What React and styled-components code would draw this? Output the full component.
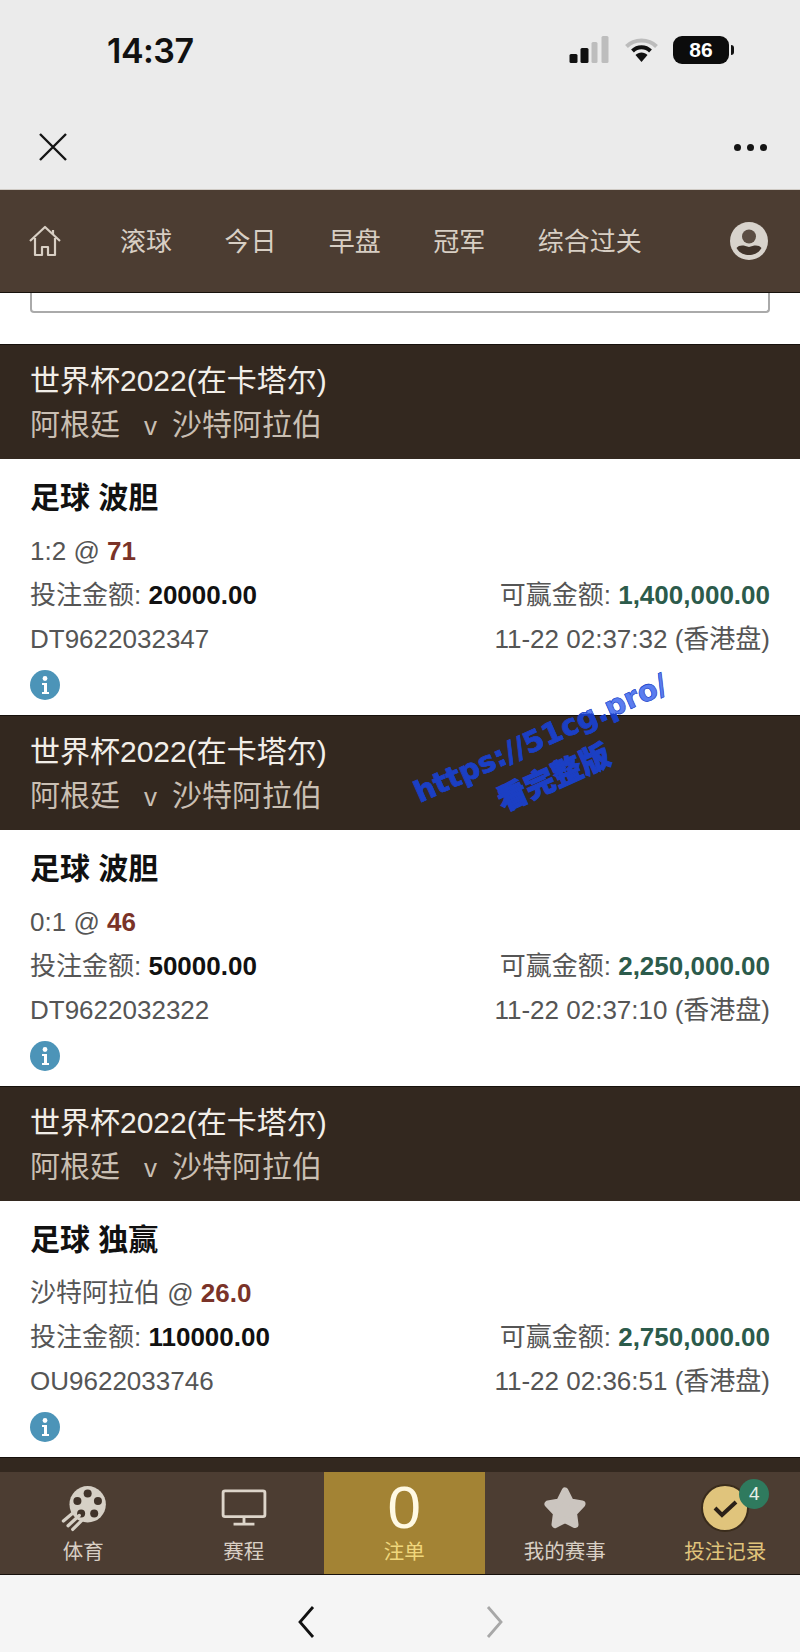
import styled, { createGlobalStyle } from 'styled-components';

const bets = [
  { market: '足球 波胆', pick: '1:2', odds: '71', stake: '20000.00', win: '1,400,000.00', id: 'DT9622032347', time: '11-22 02:37:32 (香港盘)' },
  { market: '足球 波胆', pick: '0:1', odds: '46', stake: '50000.00', win: '2,250,000.00', id: 'DT9622032322', time: '11-22 02:37:10 (香港盘)' },
  { market: '足球 独赢', pick: '沙特阿拉伯', odds: '26.0', stake: '110000.00', win: '2,750,000.00', id: 'OU9622033746', time: '11-22 02:36:51 (香港盘)' },
];

const links = ['滚球', '今日', '早盘', '冠军', '综合过关'];

const App = () => <>
  <GlobalStyle />
  <Phone>
    <StatusBar>
      <Clock>14:37</Clock>
      <StatusIcons>
        <svg width="41" height="30" viewBox="0 0 40 30">
          <rect x="0" y="19" width="8" height="9" rx="1.5" fill="#111" />
          <rect x="11" y="13" width="8" height="15" rx="1.5" fill="#111" />
          <rect x="22" y="7" width="6" height="21" rx="1.5" fill="#bdbdbd" />
          <rect x="32" y="1" width="7" height="27" rx="1.5" fill="#bdbdbd" />
        </svg>
        <svg width="35" height="26" viewBox="0 0 34 26">
          <path d="M2 9.5 C10 1.5 24 1.5 32 9.5" fill="none" stroke="#bcbcbc" strokeWidth="4" />
          <path d="M8 14 C13 9 21 9 26 14" fill="none" stroke="#111" strokeWidth="4" />
          <path d="M11 18 C14 14.5 20 14.5 23 18 L17 25 Z" fill="#111" />
        </svg>
        <Battery>86<BatteryNub /></Battery>
      </StatusIcons>
    </StatusBar>

    <Toolbar>
      <svg width="30" height="30" viewBox="0 0 30 30">
        <path d="M2 2 L28 28 M28 2 L2 28" stroke="#151515" strokeWidth="2.4" fill="none" />
      </svg>
      <Dots><i /><i /><i /></Dots>
    </Toolbar>

    <Nav>
      <svg width="34" height="32" viewBox="0 0 34 32">
        <path d="M2 16 L17 2 L32 16 M7 13 V30 H14 V22 H20 V30 H27 V13 M25 5 V9" fill="none" stroke="#d8cfc4" strokeWidth="2.2" strokeLinejoin="round" />
      </svg>
      <NavLinks>
        {links.map(link => <NavLink key={link}>{link}</NavLink>)}
      </NavLinks>
      <svg width="38" height="38" viewBox="0 0 38 38">
        <circle cx="19" cy="19" r="19" fill="#d8d3cc" />
        <circle cx="19" cy="14.5" r="7" fill="#5b4d43" />
        <path d="M6.5 26 C9 22.5 14 23 19 25 C24 23 29 22.5 31.5 26 C28 32 23 33 19 33 C15 33 10 32 6.5 26 Z" fill="#40332a" />
      </svg>
    </Nav>

    <Content>
      <SearchBox />
      {bets.map((bet, i) => (
        <div key={i}>
          <MatchHeader>
            <League>世界杯2022(在卡塔尔)</League>
            <Teams>阿根廷<Versus>v</Versus>沙特阿拉伯</Teams>
          </MatchHeader>
          <BetBody>
            <Market>{bet.market}</Market>
            <Row>
              <span>{bet.pick} @ <Odds>{bet.odds}</Odds></span>
            </Row>
            <Row>
              <span>投注金额: <Stake>{bet.stake}</Stake></span>
              <span>可赢金额: <Win>{bet.win}</Win></span>
            </Row>
            <Row>
              <span>{bet.id}</span>
              <span>{bet.time}</span>
            </Row>
            <InfoIcon viewBox="0 0 30 30">
              <circle cx="15" cy="15" r="15" fill="#4c94b8" />
              <circle cx="15" cy="8.5" r="2.4" fill="#fff" />
              <path d="M12 13 H17 V22 H19 V24 H12 V22 H14 V15 H12 Z" fill="#fff" />
            </InfoIcon>
          </BetBody>
        </div>
      ))}
      <MatchHeader />
    </Content>

    <TabBar>
      <Tab>
        <TabIcon>
          <svg width="56" height="52" viewBox="0 0 60 54">
            <circle cx="35" cy="23" r="19.5" fill="#d6d0c6" />
            <circle cx="35" cy="11.5" r="4.3" fill="#40332a" />
            <circle cx="46" cy="19.5" r="4.3" fill="#40332a" />
            <circle cx="42" cy="33" r="4.3" fill="#40332a" />
            <circle cx="28" cy="33" r="4.3" fill="#40332a" />
            <circle cx="24" cy="19.5" r="4.3" fill="#40332a" />
            <path d="M9 41 L22 30 M14 46 L26 35 M19 50 L29 40" stroke="#d6d0c6" strokeWidth="3.5" strokeLinecap="round" />
          </svg>
        </TabIcon>
        <TabLabel>体育</TabLabel>
      </Tab>
      <Tab>
        <TabIcon>
          <svg width="46" height="38" viewBox="0 0 48 40">
            <rect x="2" y="2" width="44" height="27" rx="2" fill="none" stroke="#ddd5ca" strokeWidth="3" />
            <path d="M24 30 V36 M13 37 H35" stroke="#ddd5ca" strokeWidth="3" />
          </svg>
        </TabIcon>
        <TabLabel>赛程</TabLabel>
      </Tab>
      <Tab $active>
        <TabIcon><Count>0</Count></TabIcon>
        <TabLabel $color="#f0d77c">注单</TabLabel>
      </Tab>
      <Tab>
        <TabIcon>
          <svg width="46" height="46" viewBox="0 0 46 46">
            <path d="M23 6 L28.5 17 L40 19 L31.5 28 L33 39.5 L23 34.5 L13 39.5 L14.5 28 L6 19 L17.5 17 Z" fill="#cbc5bf" stroke="#cbc5bf" strokeWidth="7" strokeLinejoin="round" />
          </svg>
        </TabIcon>
        <TabLabel>我的赛事</TabLabel>
      </Tab>
      <Tab>
        <TabIcon>
          <svg width="48" height="48" viewBox="0 0 48 48">
            <circle cx="24" cy="24" r="23" fill="#e0c47c" stroke="#3a2c1c" strokeWidth="2" />
            <path d="M14 24 L21 31 L35 18" fill="none" stroke="#2b2118" strokeWidth="4" />
          </svg>
          <Badge>4</Badge>
        </TabIcon>
        <TabLabel $color="#e0c47c">投注记录</TabLabel>
      </Tab>
    </TabBar>

    <BrowserBar>
      <svg width="18" height="32" viewBox="0 0 18 32">
        <path d="M16 1 L3 16 L16 31" fill="none" stroke="#111" strokeWidth="2.8" />
      </svg>
      <svg width="18" height="32" viewBox="0 0 18 32">
        <path d="M2 1 L15 16 L2 31" fill="none" stroke="#a8a8a8" strokeWidth="2.8" />
      </svg>
    </BrowserBar>

    <Watermark>
      <WatermarkUrl>https://51cg.pro/</WatermarkUrl>
      <WatermarkText>看完整版</WatermarkText>
    </Watermark>
  </Phone>
</>;

const GlobalStyle = createGlobalStyle`
  body {
    margin: 0;
    font-family: "Liberation Sans", "Noto Sans CJK SC", sans-serif;
  }
`;

const Phone = styled.div`
  position: relative;
  display: flex;
  flex-direction: column;
  width: 800px;
  height: 1652px;
  overflow: hidden;
  background: #fff;
`;

const StatusBar = styled.div`
  display: flex;
  align-items: center;
  justify-content: space-between;
  height: 100px;
  padding: 0 71px 0 107px;
  background: #ebebeb;
`;

const Clock = styled.span`
  font-family: "Inter", "Liberation Sans", sans-serif;
  font-size: 34px;
  font-weight: 600;
  letter-spacing: -0.5px;
  color: #111;
`;

const StatusIcons = styled.div`
  display: flex;
  align-items: center;
  gap: 14px;
`;

const Battery = styled.div`
  position: relative;
  display: flex;
  align-items: center;
  justify-content: center;
  width: 56px;
  height: 28px;
  border-radius: 9px;
  background: #0c0c0c;
  color: #fff;
  font-size: 21px;
  font-weight: 700;
`;

const BatteryNub = styled.i`
  position: absolute;
  right: -5px;
  top: 9px;
  width: 3px;
  height: 10px;
  border-radius: 0 3px 3px 0;
  background: #111;
`;

const Toolbar = styled.div`
  display: flex;
  align-items: center;
  justify-content: space-between;
  height: 84px;
  padding: 5px 33px 0 38px;
  background: #ebebeb;
`;

const Dots = styled.div`
  display: flex;
  gap: 6px;
  i {
    width: 7px;
    height: 7px;
    border-radius: 50%;
    background: #151515;
  }
`;

const Nav = styled.div`
  display: flex;
  align-items: center;
  height: 102px;
  padding: 0 32px 0 28px;
  background: #4c3d32;
  border-top: 1px solid #cfcac4;
  border-bottom: 1px solid #17110c;
`;

const NavLinks = styled.div`
  display: flex;
  flex: 1;
  gap: 52.4px;
  margin-left: 58px;
  margin-bottom: 3px;
`;

const NavLink = styled.span`
  font-size: 26px;
  color: #d8cfc4;
`;

const Content = styled.div`
  flex: 1;
  min-height: 0;
  overflow: hidden;
  background: #fff;
`;

const SearchBox = styled.div`
  height: 18px;
  margin: 0 30px 31px;
  border: 2px solid #aaa;
  border-top: none;
  border-radius: 0 0 4px 4px;
`;

const MatchHeader = styled.div`
  height: 115px;
  padding: 14px 30px 0;
  box-sizing: border-box;
  background: #33281f;
  border-top: 1px solid #17110c;
`;

const League = styled.div`
  font-size: 30px;
  line-height: 44px;
  color: #f2eee8;
`;

const Teams = styled.div`
  font-size: 30px;
  line-height: 44px;
  color: #c9bfb3;
`;

const Versus = styled.span`
  margin: 0 15px 0 24px;
  font-size: 26px;
`;

const BetBody = styled.div`
  height: 256px;
  padding: 17px 30px 0;
  box-sizing: border-box;
  background: #fff;
  color: #555;
  font-size: 26px;
`;

const Market = styled.div`
  margin-bottom: 9px;
  font-size: 30px;
  font-weight: 700;
  line-height: 44px;
  color: #111;
`;

const Row = styled.div`
  display: flex;
  justify-content: space-between;
  line-height: 44px;
`;

const Odds = styled.b`
  color: #7a3328;
`;

const Stake = styled.b`
  color: #111;
`;

const Win = styled.b`
  color: #2c5b4b;
`;

const InfoIcon = styled.svg`
  display: block;
  width: 30px;
  height: 30px;
  margin-top: 9px;
`;

const TabBar = styled.div`
  display: grid;
  grid-template-columns: repeat(5, 160.5px);
  height: 103px;
  padding-left: 3px;
  background: #4c3d32;
  border-bottom: 1px solid #17110c;
  box-sizing: border-box;
`;

const Tab = styled.div`
  display: flex;
  flex-direction: column;
  align-items: center;
  background: ${p => (p.$active ? '#a38334' : 'transparent')};
`;

const TabIcon = styled.div`
  position: relative;
  display: flex;
  align-items: center;
  justify-content: center;
  height: 70px;
  padding-top: 2px;
  box-sizing: border-box;
`;

const TabLabel = styled.span`
  margin-top: -2px;
  font-size: 20.5px;
  line-height: 24px;
  color: ${p => p.$color || '#d8cfc4'};
`;

const Count = styled.span`
  font-size: 60px;
  line-height: 60px;
  color: #fff9e3;
`;

const Badge = styled.span`
  position: absolute;
  top: 7px;
  right: -20px;
  width: 30px;
  height: 30px;
  border-radius: 50%;
  background: #2f7a5e;
  color: #e8f0e8;
  font-size: 19px;
  line-height: 30px;
  text-align: center;
`;

const BrowserBar = styled.div`
  display: flex;
  align-items: center;
  justify-content: center;
  gap: 171px;
  height: 77px;
  padding-top: 16px;
  box-sizing: border-box;
  background: #f5f5f5;
`;

const Watermark = styled.div`
  position: absolute;
  left: 545px;
  top: 758px;
  display: flex;
  flex-direction: column;
  align-items: center;
  transform: translate(-50%, -50%) rotate(-24deg);
  font-weight: 700;
  color: #1b3fc4;
`;

const WatermarkUrl = styled.span`
  font-family: "DejaVu Sans", sans-serif;
  font-size: 29px;
  line-height: 39px;
  transform: translateX(4px);
  -webkit-text-stroke: 0.6px #1b3fc4;
  background: linear-gradient(204deg, #5a7df0 33%, #1b3fc4 33%);
  -webkit-background-clip: text;
  background-clip: text;
  color: transparent;
`;

const WatermarkText = styled.span`
  font-family: "Noto Sans CJK SC", sans-serif;
  font-size: 30px;
  font-weight: 900;
  line-height: 39px;
  -webkit-text-stroke: 1px #1b3fc4;
`;

export default App;
